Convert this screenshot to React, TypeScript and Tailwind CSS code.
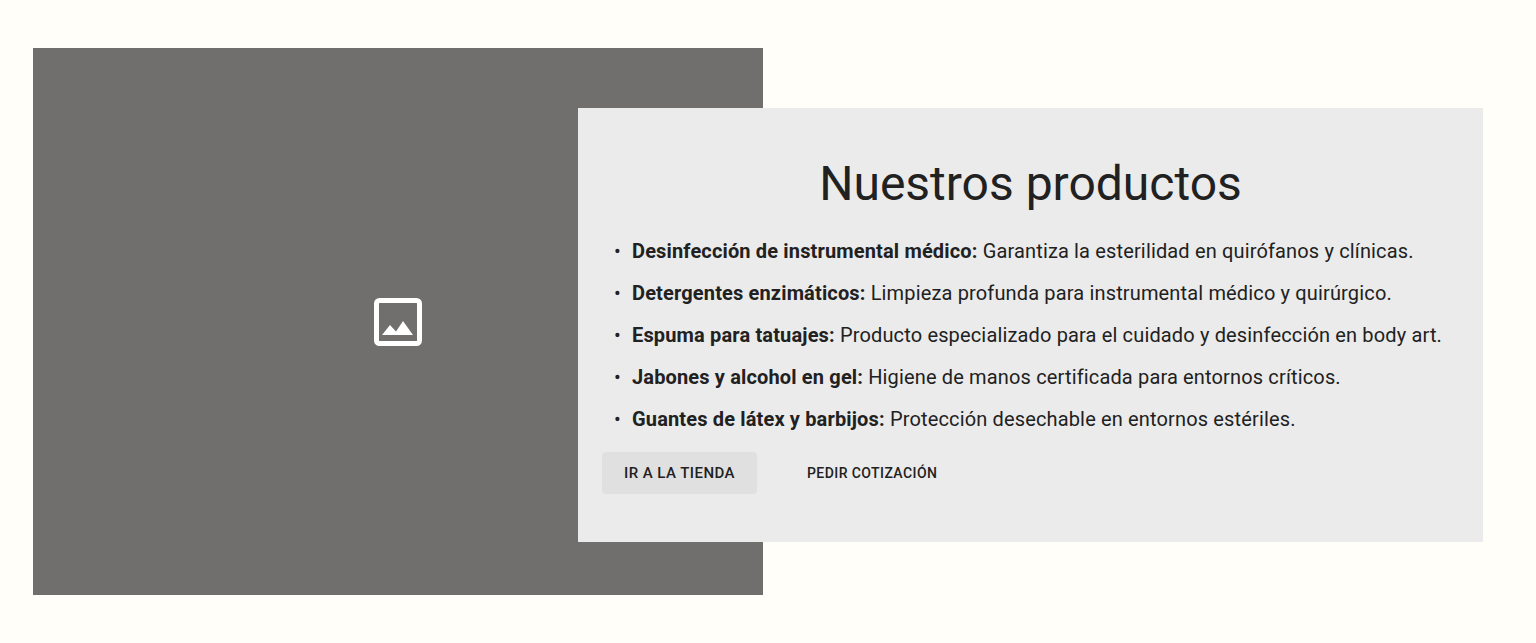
export default function App() {
  const items: [string, string][] = [
    ["Desinfección de instrumental médico:", "Garantiza la esterilidad en quirófanos y clínicas."],
    ["Detergentes enzimáticos:", "Limpieza profunda para instrumental médico y quirúrgico."],
    ["Espuma para tatuajes:", "Producto especializado para el cuidado y desinfección en body art."],
    ["Jabones y alcohol en gel:", "Higiene de manos certificada para entornos críticos."],
    ["Guantes de látex y barbijos:", "Protección desechable en entornos estériles."],
  ];
  return (
    <div className="min-h-[643px] bg-[#fffef9] font-['Roboto',sans-serif] text-[#212121] pt-12 pl-[33px] flex items-start">
      <div className="w-[730px] h-[547px] shrink-0 bg-[#706f6d] flex items-center justify-center">
        <svg width="48" height="48" viewBox="0 0 48 48" fill="none">
          <rect x="2.5" y="2.5" width="43" height="43" rx="3" stroke="#fff" strokeWidth="5" />
          <path d="M8 37 L16 27 L22 33.5 L29 23 L39 37 Z" fill="#fff" />
        </svg>
      </div>
      <div className="relative z-10 ml-[-185px] mt-[60px] w-[905px] h-[434px] shrink-0 bg-[#ebebeb] px-6 pt-[48px]">
        <h2 className="text-center text-[48px] leading-[56px] font-normal">Nuestros productos</h2>
        <ul className="mt-[24px] pl-[12px] text-[20px] leading-[30px] tracking-[0.15px]">
          {items.map(([b, t]) => (
            <li key={b} className="mb-3 flex">
              <span className="w-[18px] shrink-0">•</span>
              <span><strong className="font-bold">{b}</strong> {t}</span>
            </li>
          ))}
        </ul>
        <div className="mt-[18px] flex items-center gap-[28px]">
          <button className="h-[42px] w-[155px] rounded bg-[#e0e0e0] text-[15px] font-medium tracking-[0.45px]">IR A LA TIENDA</button>
          <button className="h-[42px] rounded text-[14px] font-medium tracking-[0.42px] ml-[22px]">PEDIR COTIZACIÓN</button>
        </div>
      </div>
    </div>
  );
}
